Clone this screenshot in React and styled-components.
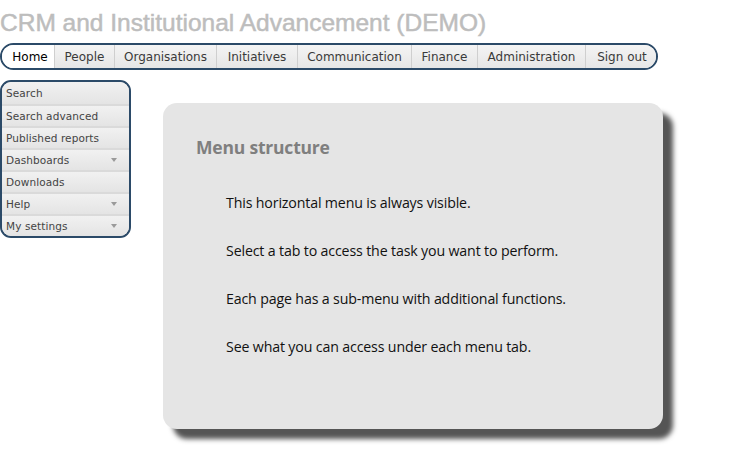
import React from 'react';
import styled, { createGlobalStyle } from 'styled-components';

const Global = createGlobalStyle`
  html, body {
    margin: 0;
    padding: 0;
    background: #fff;
  }
`;

const Page = styled.div`
  width: 735px;
  height: 469px;
  overflow: hidden;
  font-family: 'DejaVu Sans', Verdana, sans-serif;
`;

const Title = styled.h1`
  margin: 0;
  padding: 8px 0 0 0;
  height: 37px;
  box-sizing: border-box;
  font-family: 'Liberation Sans', Arial, sans-serif;
  font-weight: 400;
  font-size: 24.5px;
  line-height: 30px;
  color: #bdbdbd;
  -webkit-text-stroke: 0.5px #bdbdbd;
  white-space: nowrap;
`;

const TopNav = styled.nav`
  display: flex;
  width: 658px;
  height: 27px;
  margin-top: 6px;
  box-sizing: border-box;
  border: 2px solid #2b4a68;
  border-radius: 14px;
  overflow: hidden;
  background: #ebebeb;
`;

const Tab = styled.a`
  display: flex;
  align-items: center;
  justify-content: center;
  width: ${(p) => p.w}px;
  flex: none;
  box-sizing: border-box;
  font-size: 12px;
  color: ${(p) => (p.active ? '#000' : '#3a3a3a')};
  background: ${(p) =>
    p.active ? '#fff' : 'linear-gradient(#f4f4f4, #e6e6e6)'};
  border-left: ${(p) => (p.first ? 'none' : '1px solid #cfcfcf')};
  flex-grow: ${(p) => (p.last ? 1 : 0)};
  padding-left: ${(p) => (p.first ? 4 : 0)}px;
`;

const Body = styled.div`
  display: flex;
  align-items: flex-start;
  margin-top: 10px;
`;

const SideMenu = styled.ul`
  list-style: none;
  margin: 0;
  padding: 0;
  width: 131px;
  flex: none;
  box-sizing: border-box;
  border: 2px solid #2b4a68;
  border-radius: 11px;
  overflow: hidden;
  background: #ececec;
`;

const SideItem = styled.li`
  display: flex;
  align-items: center;
  justify-content: space-between;
  height: 22px;
  box-sizing: border-box;
  padding: 0 12px 0 4px;
  font-size: 10.5px;
  color: #444;
  background: linear-gradient(#f1f1f1, #e4e4e4);
  border-top: ${(p) => (p.first ? 'none' : '2px solid #dadada')};
  letter-spacing: 0.1px;
`;

const Caret = styled.span`
  width: 0;
  height: 0;
  border-left: 3.5px solid transparent;
  border-right: 3.5px solid transparent;
  border-top: 4px solid #9a9a9a;
`;

const Card = styled.section`
  margin: 23px 0 0 32px;
  width: 500px;
  height: 326px;
  box-sizing: border-box;
  background: #e5e5e5;
  border-radius: 14px;
  box-shadow: 10px 10px 5px #555;
  padding: 32px 0 0 33px;
  font-family: 'Open Sans', 'Noto Sans', sans-serif;
`;

const CardTitle = styled.h2`
  margin: 0 0 33px 0;
  font-size: 17.5px;
  font-weight: 700;
  color: #7f7f7f;
  line-height: 24px;
  letter-spacing: -0.2px;
`;

const Para = styled.p`
  margin: 0 0 26px 30px;
  font-size: 14.2px;
  line-height: 22px;
  color: #111;
  letter-spacing: -0.15px;
`;

const tabs = [
  ['Home', 52],
  ['People', 60],
  ['Organisations', 102],
  ['Initiatives', 81],
  ['Communication', 114],
  ['Finance', 66],
  ['Administration', 108],
  ['Sign out', 73],
];

const side = [
  ['Search', false],
  ['Search advanced', false],
  ['Published reports', false],
  ['Dashboards', true],
  ['Downloads', false],
  ['Help', true],
  ['My settings', true],
];

const lines = [
  'This horizontal menu is always visible.',
  'Select a tab to access the task you want to perform.',
  'Each page has a sub-menu with additional functions.',
  'See what you can access under each menu tab.',
];

export default function App() {
  return (
    <Page>
      <Global />
      <Title>CRM and Institutional Advancement (DEMO)</Title>
      <TopNav>
        {tabs.map(([label, w], i) => (
          <Tab
            key={label}
            w={w}
            active={i === 0}
            first={i === 0}
            last={i === tabs.length - 1}
          >
            {label}
          </Tab>
        ))}
      </TopNav>
      <Body>
        <SideMenu>
          {side.map(([label, sub], i) => (
            <SideItem key={label} first={i === 0}>
              {label}
              {sub && <Caret />}
            </SideItem>
          ))}
        </SideMenu>
        <Card>
          <CardTitle>Menu structure</CardTitle>
          {lines.map((t) => (
            <Para key={t}>{t}</Para>
          ))}
        </Card>
      </Body>
    </Page>
  );
}
